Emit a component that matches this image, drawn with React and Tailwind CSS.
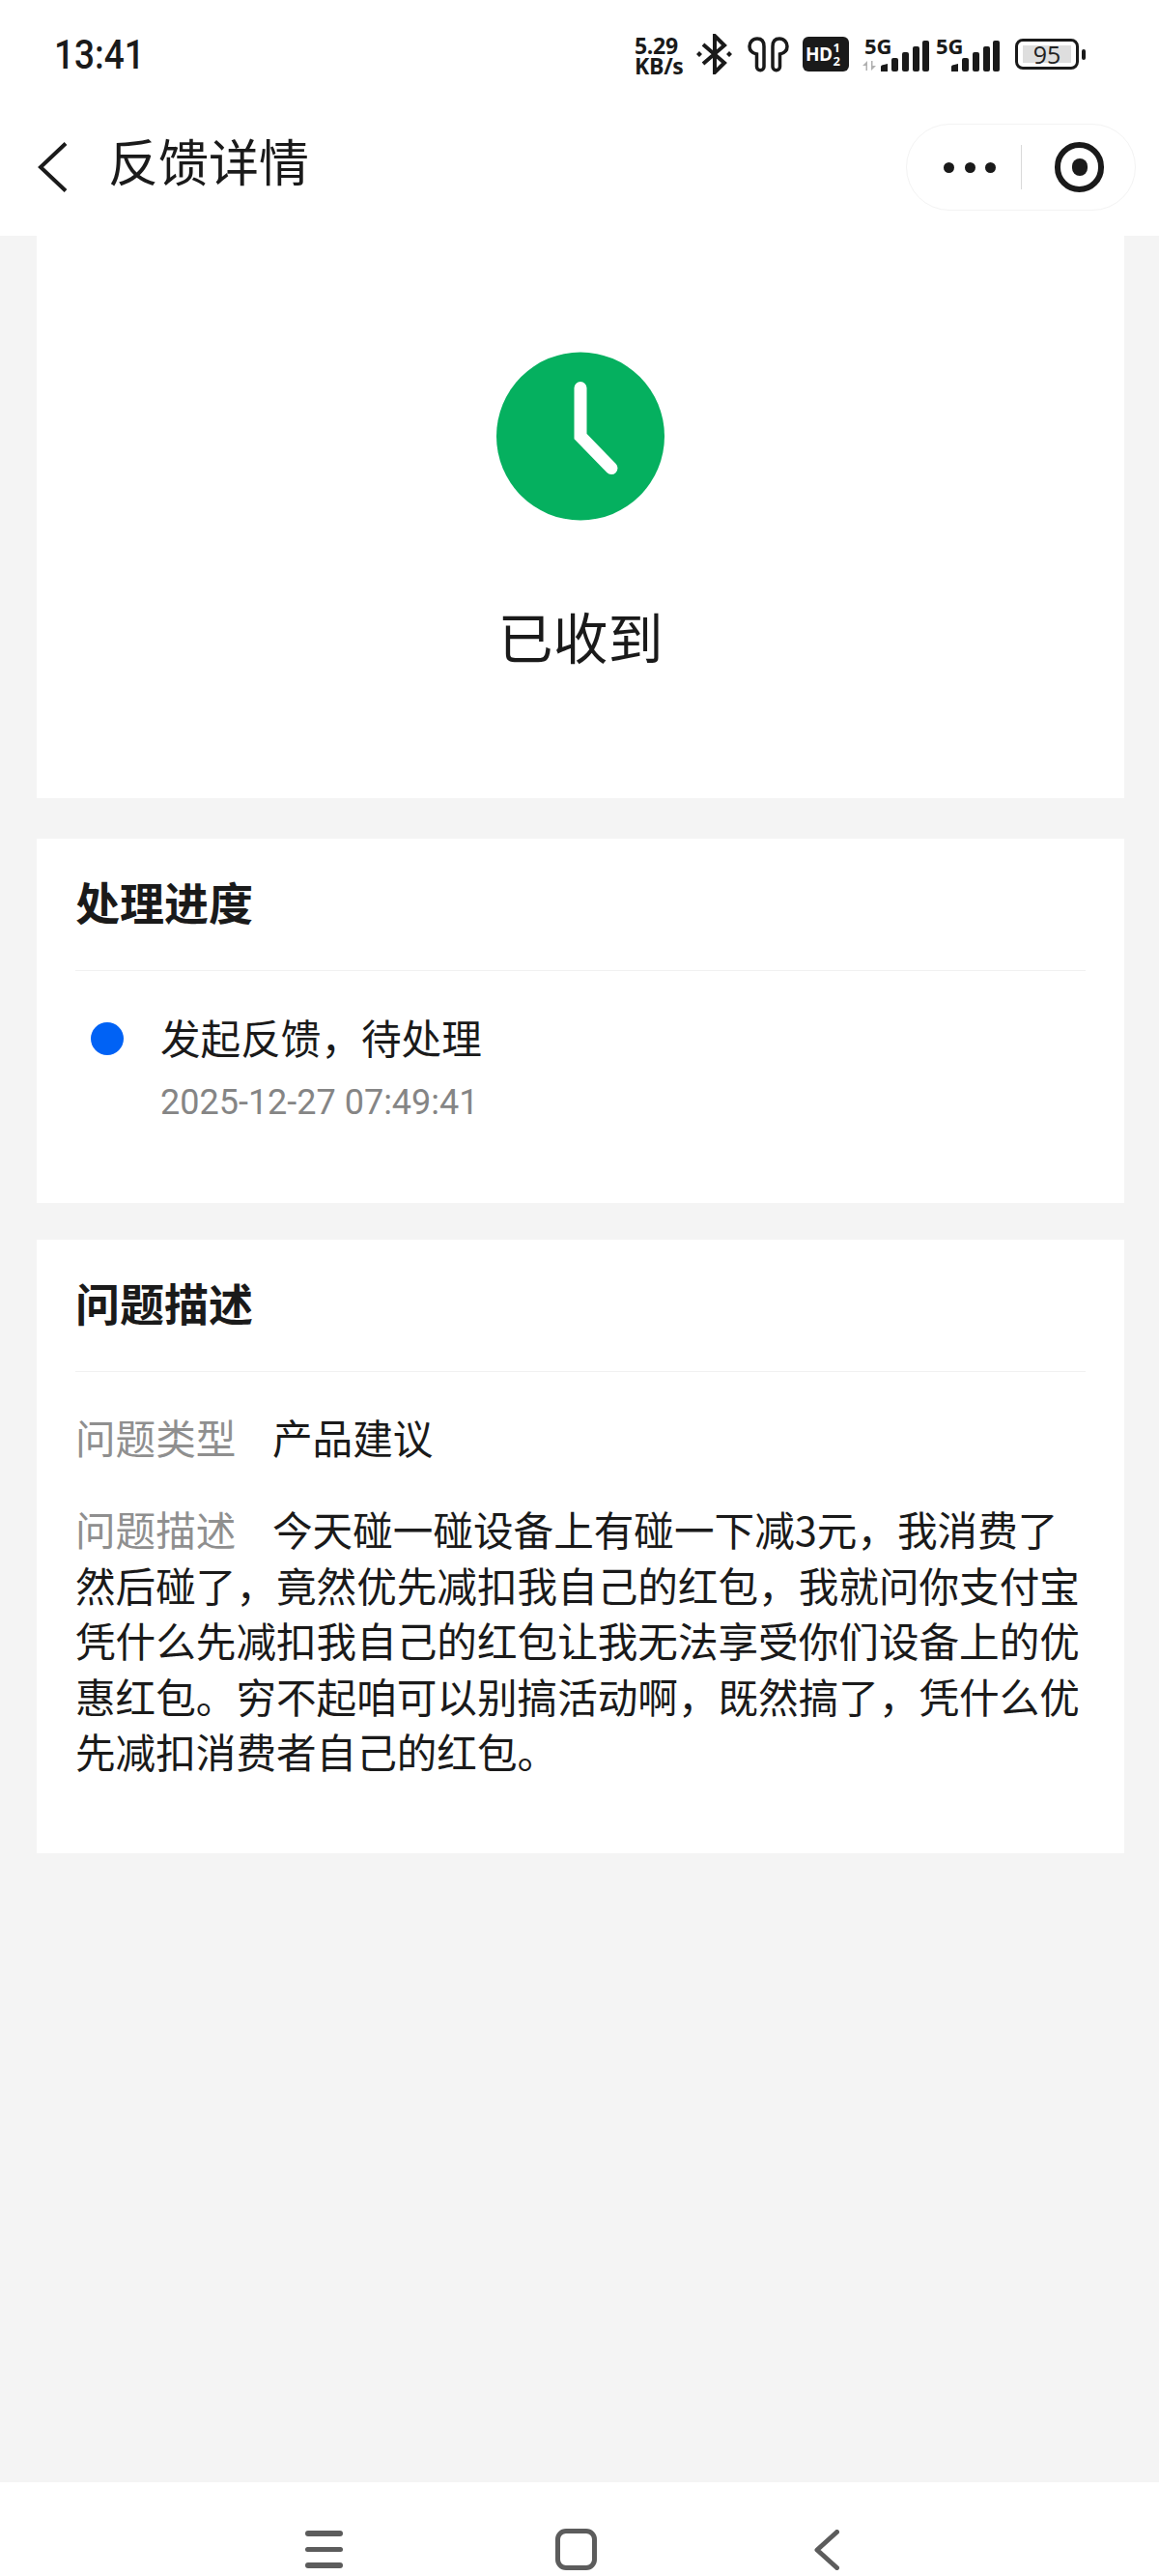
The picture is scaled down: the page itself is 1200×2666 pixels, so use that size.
const cjk = { fontFamily: '"Noto Sans CJK SC","Noto Sans",sans-serif' };
const ui = { fontFamily: '"Open Sans",sans-serif' };

function Signal({ arrows }) {
  return (
    <div className={`relative h-[35px] ${arrows ? 'ml-[13px] w-[70px]' : 'ml-[7px] w-[66px]'}`}>
      <span className={`absolute top-0 text-[22px] leading-[17px] font-bold text-[#1a1a1a] ${arrows ? 'left-[3px]' : 'left-0'}`} style={ui}>5G</span>
      {arrows && (
        <svg width="16" height="12" viewBox="0 0 16 12" className="absolute left-0 top-[23px]" fill="#b0b0b0">
          <path d="M1 6 L6 1 V11 H4.5 V6z M15 6 L10 11 V1 H11.5 V6z" />
        </svg>
      )}
      <svg width="50" height="32" viewBox="0 0 50 32" className="absolute right-0 bottom-0" fill="#1a1a1a">
        <path d="M0 32 V27 Q0 26 1 25.5 L7 24 V32z" />
        <rect x="11" y="18" width="7" height="14" rx="2" />
        <rect x="22" y="12" width="7" height="20" rx="2" />
        <rect x="33" y="6" width="7" height="26" rx="2" />
        <rect x="43" y="0" width="7" height="32" rx="2" />
      </svg>
    </div>
  );
}

function StatusBar() {
  return (
    <div className="flex items-center h-[42px] pl-[56px] pr-[76px]">
      <span className="origin-left scale-x-[0.88] text-[42px] leading-[42px] mt-[2px] font-medium text-[#1a1a1a]" style={{ fontFamily: '"Roboto",sans-serif' }}>13:41</span>
      <div className="ml-auto w-[52px] mt-[4px] flex flex-col text-[23px] leading-[21px] font-bold tracking-[-0.3px] text-[#1a1a1a] whitespace-nowrap" style={ui}>
        <span>5.29</span>
        <span>KB/s</span>
      </div>
      <svg width="37" height="42" viewBox="0 0 37 42" className="ml-[12px]" fill="none" stroke="#1a1a1a" strokeWidth="4">
        <path d="M7 11 L29 30 L19 40 V2 L29 12 L7 31" />
        <path d="M3 18 l3 3 -3 3 -3 -3z M34 18 l3 3 -3 3 -3 -3z" fill="#1a1a1a" stroke="none" />
      </svg>
      <svg width="43" height="37" viewBox="0 0 43 37" className="ml-[16px]" fill="none" stroke="#1a1a1a" strokeWidth="3.5">
        <path d="M10 2 C5 2 2 6 2 10 C2 14 5 17 9.5 18 V31 C9.5 36 17 36 17 31 V10 C17 5 15 2 10 2z" />
        <path d="M33 2 C38 2 41 6 41 10 C41 14 38 17 33.5 18 V31 C33.5 36 26 36 26 31 V10 C26 5 28 2 33 2z" />
      </svg>
      <div className="ml-[14px] w-[48px] h-[36px] rounded-[6px] bg-[#1a1a1a] text-white font-bold flex items-center whitespace-nowrap" style={ui}>
        <span className="text-[19px] leading-none ml-[3px] tracking-[-0.5px]">HD</span>
        <span className="flex flex-col items-center text-[13px] leading-[14px] ml-[1px]"><span>1</span><span>2</span></span>
      </div>
      <Signal arrows />
      <Signal />
      <div className="ml-[16px] w-[66px] h-[32px] rounded-[8px] border-[3px] border-[#1a1a1a] px-[5px] py-[4px]">
        <div className="w-full h-full bg-[#dedede] flex items-center justify-center text-[25px] text-[#222] leading-none" style={ui}>95</div>
      </div>
      <div className="ml-[3px] w-[4px] h-[11px] rounded-[2px] bg-[#1a1a1a]" />
    </div>
  );
}

function NavBar() {
  return (
    <div className="mt-[51px] flex items-center h-[90px] pl-[38px] pr-[24px]">
      <svg width="32" height="52" viewBox="0 0 32 52" fill="none" stroke="#1a1a1a" strokeWidth="4"><path d="M30 1.5 L4 26 L30 50.5" /></svg>
      <h1 className="ml-[42px] -mt-[14px] text-[52px] leading-[56px] text-[#1a1a1a]">反馈详情</h1>
      <div className="ml-auto w-[238px] h-[90px] rounded-full border border-[#f3f3f3] flex items-center">
        <div className="flex gap-[10.5px] ml-[38px]">
          <span className="w-[11px] h-[11px] rounded-full bg-[#1a1a1a]" />
          <span className="w-[11px] h-[11px] rounded-full bg-[#1a1a1a]" />
          <span className="w-[11px] h-[11px] rounded-full bg-[#1a1a1a]" />
        </div>
        <span className="ml-[26px] w-[1px] h-[46px] bg-[#d9d9d9]" />
        <span className="ml-[34px] w-[51px] h-[52px] rounded-full border-[6px] border-[#1a1a1a] flex items-center justify-center">
          <span className="w-[16px] h-[18px] rounded-full bg-[#1a1a1a]" />
        </span>
      </div>
    </div>
  );
}

function Card({ title, children, className }) {
  return (
    <section className={`bg-white ml-[38px] mr-[36px] px-[40px] ${className}`}>
      <h2 className="h-[137px] pt-[33px] border-b border-[#f1f1f1] text-[46px] leading-[62px] font-bold text-[#1a1a1a]">{title}</h2>
      {children}
    </section>
  );
}

export default function App() {
  return (
    <div className="w-[1200px] h-[2666px] bg-[#f4f4f4] flex flex-col overflow-hidden" style={cjk}>
      <header className="bg-white h-[244px] shrink-0 pt-[35px]">
        <StatusBar />
        <NavBar />
      </header>

      <section className="bg-white ml-[38px] mr-[36px] h-[582px] flex flex-col items-center pt-[120px]">
        <svg width="174" height="175" viewBox="0 0 174 174">
          <circle cx="87" cy="87" r="87" fill="#05b05f" />
          <path d="M87 37 V87 L119 120" fill="none" stroke="#fff" strokeWidth="13" strokeLinecap="round" />
        </svg>
        <div className="mt-[82px] text-[57px] leading-[72px] text-[#1a1a1a]">已收到</div>
      </section>

      <Card title="处理进度" className="mt-[42px] h-[377px]">
        <div className="flex pt-[41px]">
          <span className="ml-[16px] mt-[12px] w-[34px] h-[34px] rounded-full bg-[#0062f5] shrink-0" />
          <div className="ml-[38px]">
            <div className="text-[41.6px] leading-[54px] text-[#1a1a1a]">发起反馈，待处理</div>
            <div className="mt-[17px] text-[36px] leading-[48px] text-[#858585]" style={{ fontFamily: '"Roboto",sans-serif' }}>2025-12-27 07:49:41</div>
          </div>
        </div>
      </Card>

      <Card title="问题描述" className="mt-[38px] h-[635px]">
        <div className="flex pt-[39px] text-[41.6px] leading-[56px]">
          <span className="text-[#8f8f8f] w-[204px] shrink-0">问题类型</span>
          <span className="text-[#1a1a1a]">产品建议</span>
        </div>
        <p className="mt-[39px] text-[41.6px] leading-[57.5px] text-[#1a1a1a]">
          <span className="text-[#8f8f8f] inline-block w-[204px]">问题描述</span>
          今天碰一碰设备上有碰一下减3元，我消费了然后碰了，竟然优先减扣我自己的红包，我就问你支付宝凭什么先减扣我自己的红包让我无法享受你们设备上的优惠红包。穷不起咱可以别搞活动啊，既然搞了，凭什么优先减扣消费者自己的红包。
        </p>
      </Card>

      <footer className="mt-auto bg-white h-[97px] shrink-0 pt-[48px] pl-[316px]">
        <div className="flex items-center h-[43px]">
          <div className="w-[39px] flex flex-col gap-[11px]">
            <span className="h-[5.5px] rounded-full bg-[#5c5c5c]" />
            <span className="h-[5.5px] rounded-full bg-[#5c5c5c]" />
            <span className="h-[5.5px] rounded-full bg-[#5c5c5c]" />
          </div>
          <div className="ml-[220px] w-[43px] h-[43px] rounded-[11px] border-[5px] border-[#5c5c5c]" />
          <svg width="26" height="42" viewBox="0 0 26 42" className="ml-[225px]" fill="none" stroke="#5c5c5c" strokeWidth="5" strokeLinecap="round" strokeLinejoin="round">
            <path d="M23.5 2.5 L3 21 L23.5 39.5" />
          </svg>
        </div>
      </footer>
    </div>
  );
}
